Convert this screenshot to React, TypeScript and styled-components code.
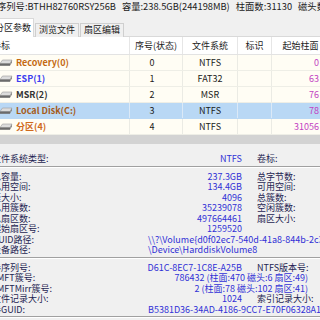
import React from "react";
import styled, { createGlobalStyle } from "styled-components";

const Global = createGlobalStyle`
  html, body { margin: 0; padding: 0; background: #f0f0f0; }
  body { font-family: "Noto Sans CJK SC", "Noto Sans", sans-serif; }
`;

const Viewport = styled.div`
  width: 320px;
  height: 320px;
  overflow: hidden;
  background: #f0f0f0;
`;

const Window = styled.div`
  margin-left: -8px;
  width: 345px;
  display: flex;
  flex-direction: column;
  font-size: 9px;
  color: #1a1a1a;
  white-space: nowrap;
`;

const TopBar = styled.div`
  height: 16px;
  display: flex;
  gap: 6px;
  padding-left: 5px;
  font-size: 9.3px;
  line-height: 12px;
  color: #1a1a1a;
`;

const TabStrip = styled.div`
  height: 21px;
  display: flex;
  align-items: flex-end;
  gap: 1px;
  box-shadow: inset 0 -1px #d9d9d9;
`;

const Tab = styled.div<{ $active?: boolean }>`
  box-sizing: border-box;
  height: ${(p) => (p.$active ? 19 : 14)}px;
  padding: 0 ${(p) => (p.$active ? "2px" : "3px")};
  border: 1px solid ${(p) => (p.$active ? "#d9d9d9" : "#cfcfcf")};
  border-bottom: none;
  background: ${(p) => (p.$active ? "#ffffff" : "#f0f0f0")};
  line-height: ${(p) => (p.$active ? 17 : 11)}px;
  color: #1a1a1a;
`;

const COLS = "138px 53px 55px 34px 58px";

const Table = styled.div`
  display: flex;
  flex-direction: column;
  background: #ffffff;
`;

const HeaderRow = styled.div`
  box-sizing: border-box;
  height: 18px;
  display: grid;
  grid-template-columns: ${COLS};
  border-bottom: 1px solid #e3e3e3;
  background: #ffffff;
`;

const HeaderCell = styled.div<{ $align?: "left" | "center" }>`
  box-sizing: border-box;
  display: flex;
  align-items: center;
  justify-content: ${(p) => (p.$align === "left" ? "flex-start" : "center")};
  border-right: 1px solid #e6e6e6;
  line-height: 17px;
  overflow: hidden;
`;

const Row = styled.div<{ $selected?: boolean }>`
  box-sizing: border-box;
  height: 16px;
  display: grid;
  grid-template-columns: ${COLS};
  border-bottom: 1px solid ${(p) => (p.$selected ? "#b9d8f5" : "#eeeee6")};
  background: ${(p) => (p.$selected ? "#b9d8f5" : "#fffdf4")};
`;

const Cell = styled.div<{
  $align?: "left" | "center" | "right";
  $color?: string;
  $sel?: boolean;
  $pr?: number;
}>`
  box-sizing: border-box;
  display: flex;
  align-items: center;
  justify-content: ${(p) =>
    p.$align === "left" ? "flex-start" : p.$align === "right" ? "flex-end" : "center"};
  padding-right: ${(p) => p.$pr ?? 0}px;
  border-right: 1px solid ${(p) => (p.$sel ? "#dbe9f7" : "#ebebe4")};
  color: ${(p) => p.$color ?? "#1a1a1a"};
  line-height: 15px;
  overflow: hidden;
`;

const NameCell = styled(Cell)`
  padding-left: 7px;
  gap: 3px;
`;

const PartName = styled.span<{ $color: string }>`
  font-weight: 700;
  color: ${(p) => p.$color};
`;

const Splitter = styled.div`
  height: 9px;
  background: #d3d3d3;
`;

const InfoPanel = styled.div`
  padding-top: 10px;
  display: flex;
  flex-direction: column;
  background: #f0f0f0;
`;

const InfoRow = styled.div`
  height: 10.5px;
  line-height: 10.5px;
  display: grid;
  grid-template-columns: 150px 100px 15px 51px 1fr;
`;

const Label = styled.div`
  grid-column: 1;
  grid-row: 1;
  color: #1e1e52;
`;

const Label2 = styled.div`
  grid-column: 4 / 6;
  grid-row: 1;
  color: #1e1e52;
`;

const Value = styled.div<{ $kind?: "normal" | "wide" | "path" }>`
  grid-row: 1;
  grid-column: ${(p) => (p.$kind === "wide" ? "2 / 5" : p.$kind === "path" ? "2 / 6" : "2 / 3")};
  display: flex;
  justify-content: ${(p) => (p.$kind === "path" ? "flex-start" : "flex-end")};
  padding-left: ${(p) => (p.$kind === "path" ? 6 : 0)}px;
  min-width: 0;
  color: #3030d6;
`;

const Separator = styled.div`
  margin: 1px 0 4px;
  height: 1px;
  background: #a0a0a0;
  border-bottom: 1px solid #ffffff;
`;

function DriveIcon() {
  return (
    <svg width="14" height="8" viewBox="0 0 14 8">
      <path d="M3.5 1 L13 1 L11 4.5 L1 4.5 Z" fill="#dcdcdc" stroke="#9a9a9a" strokeWidth="0.6" />
      <path d="M1 4.5 L11 4.5 L11 6.8 L1 6.8 Z" fill="#6b6b6b" />
      <path d="M11 4.5 L13 1 L13 3.4 L11 6.8 Z" fill="#8d8d8d" />
    </svg>
  );
}

type Part = { name: string; color: string; idx: string; fs: string; start: string; selected?: boolean };

const parts: Part[] = [
  { name: "Recovery(0)", color: "#c46a12", idx: "0", fs: "NTFS", start: "0" },
  { name: "ESP(1)", color: "#3d3df0", idx: "1", fs: "FAT32", start: "63" },
  { name: "MSR(2)", color: "#333333", idx: "2", fs: "MSR", start: "76" },
  { name: "Local Disk(C:)", color: "#a65c1a", idx: "3", fs: "NTFS", start: "78", selected: true },
  { name: "分区(4)", color: "#d06a1c", idx: "4", fs: "NTFS", start: "31056" },
];

type Info =
  | { sep: true }
  | { label: string; value?: string; kind?: "normal" | "wide" | "path"; label2?: string };

const info: Info[] = [
  { label: "文件系统类型:", value: "NTFS", label2: "卷标:" },
  { sep: true },
  { label: "总容量:", value: "237.3GB", label2: "总字节数:" },
  { label: "已用空间:", value: "134.4GB", label2: "可用空间:" },
  { label: "簇大小:", value: "4096", label2: "总簇数:" },
  { label: "已用簇数:", value: "35239078", label2: "空闲簇数:" },
  { label: "总扇区数:", value: "497664461", label2: "扇区大小:" },
  { label: "起始扇区号:", value: "1259520" },
  { label: "GUID路径:", value: "\\\\?\\Volume{d0f02ec7-540d-41a8-844b-2c3a1f7e9d10}", kind: "path" },
  { label: "设备路径:", value: "\\Device\\HarddiskVolume8", kind: "path" },
  { sep: true },
  { label: "卷序列号:", value: "D61C-8EC7-1C8E-A25B", label2: "NTFS版本号:" },
  { label: "$MFT簇号:", value: "786432 (柱面:470 磁头:6 扇区:49)", kind: "wide" },
  { label: "$MFTMirr簇号:", value: "2 (柱面:78 磁头:102 扇区:41)", kind: "wide" },
  { label: "文件记录大小:", value: "1024", label2: "索引记录大小:" },
  { label: "卷GUID:", value: "B5381D36-34AD-4186-9CC7-E70F06328A1C", kind: "path" },
  { sep: true },
];

export default function App() {
  return (
    <Viewport>
      <Global />
      <Window>
        <TopBar>
          <span>序列号:BTHH82760RSY256B</span>
          <span>容量:238.5GB(244198MB)</span>
          <span>柱面数:31130</span>
          <span>磁头数:255</span>
        </TopBar>
        <TabStrip>
          <Tab $active>分区参数</Tab>
          <Tab>浏览文件</Tab>
          <Tab>扇区编辑</Tab>
        </TabStrip>
        <Table>
          <HeaderRow>
            <HeaderCell $align="left">卷标</HeaderCell>
            <HeaderCell>序号(状态)</HeaderCell>
            <HeaderCell>文件系统</HeaderCell>
            <HeaderCell>标识</HeaderCell>
            <HeaderCell>起始柱面</HeaderCell>
          </HeaderRow>
          {parts.map((p) => (
            <Row key={p.idx} $selected={p.selected}>
              <NameCell $align="left" $sel={p.selected}>
                <DriveIcon />
                <PartName $color={p.color}>{p.name}</PartName>
              </NameCell>
              <Cell $sel={p.selected} $pr={8}>{p.idx}</Cell>
              <Cell $sel={p.selected}>{p.fs}</Cell>
              <Cell $sel={p.selected} />
              <Cell $sel={p.selected} $align="right" $pr={10} $color="#c23fc2">
                {p.start}
              </Cell>
            </Row>
          ))}
        </Table>
        <Splitter />
        <InfoPanel>
          {info.map((r, i) =>
            "sep" in r ? (
              <Separator key={i} />
            ) : (
              <InfoRow key={i}>
                <Label>{r.label}</Label>
                {r.value && <Value $kind={r.kind}>{r.value}</Value>}
                {r.label2 && <Label2>{r.label2}</Label2>}
              </InfoRow>
            )
          )}
        </InfoPanel>
      </Window>
    </Viewport>
  );
}
